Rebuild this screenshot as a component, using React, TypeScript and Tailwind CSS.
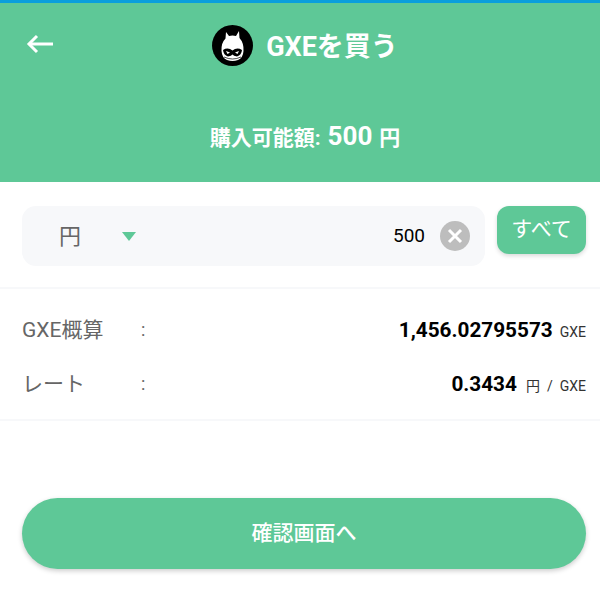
const FONT = "font-['Roboto','Noto_Sans_CJK_JP',sans-serif]";

function Logo() {
  return (
    <svg width="41" height="41" viewBox="0 0 41 41" className="shrink-0">
      <circle cx="20.5" cy="20.5" r="20.5" fill="#000" />
      <path
        d="M14 7 L17 11 Q20.5 10 24 11 L27 6 L27.5 13 Q32 18 31.5 26 Q31 33 26 35 Q20.5 37 15 35 Q10 33 9.5 26 Q9 18 13.5 13.5 Z"
        fill="#fff"
      />
      <path d="M11 25 Q16 22 20.5 25.5 Q25 22 30 25 Q29.5 30 25 31.5 Q21.5 31 20.5 29.5 Q19.5 31 16 31.5 Q11.5 30 11 25 Z" fill="#000" />
      <path d="M14 26 L18 27.5 L15.5 29 Z M27 26 L23 27.5 L25.5 29 Z" fill="#fff" />
      <path d="M12 32 Q20.5 36 29 32" fill="none" stroke="#000" strokeWidth="0.7" />
    </svg>
  );
}

function InfoRow({ label, children }: { label: string; children: React.ReactNode }) {
  return (
    <div className="flex items-center h-[54px]">
      <span className="w-[119px] text-[21px] text-[#666]">{label}</span>
      <span className="-mt-[3px] text-[18px] text-[#666]">:</span>
      <div className="ml-auto flex items-baseline text-black">{children}</div>
    </div>
  );
}

export default function App() {
  return (
    <div className={`w-[600px] h-[599px] bg-white overflow-hidden ${FONT}`}>
      <header className="h-[182px] bg-[#5ec897] border-t-[3px] border-[#0a9fdc] text-white">
        <div className="relative flex items-center justify-center pt-[22px] pl-[10px] h-[63px]">
          <svg width="28" height="20" viewBox="0 0 28 20" className="absolute left-[26px] top-[31px]" fill="none" stroke="#fff" strokeWidth="3">
            <path d="M27 10 H3" />
            <path d="M11 2 L3 10 L11 18" />
          </svg>
          <div className="flex items-center gap-[13px]">
            <Logo />
            <span className="mt-[3px] text-[27px] font-bold">GXEを買う</span>
          </div>
        </div>
        <div className="mt-[51px] pl-[10px] flex items-baseline justify-center font-bold">
          <span className="text-[21px]">購入可能額:</span>
          <span className="text-[26px] ml-[7px]">500</span>
          <span className="text-[21px] ml-[7px]">円</span>
        </div>
      </header>

      <section className="flex items-start gap-[12px] pl-[22px] pr-[14px] pt-[24px] pb-[21px] border-b-2 border-[#f7f8fa]">
        <div className="flex items-center flex-1 h-[60px] rounded-[14px] bg-[#f7f8fa]">
          <span className="ml-[37px] text-[22px] text-[#666]">円</span>
          <span className="ml-[41px] w-0 h-0 border-x-[7px] border-x-transparent border-t-[9px] border-t-[#5ec897]" />
          <span className="ml-auto text-[19px] text-black">500</span>
          <span className="mx-[15px] flex items-center justify-center w-[30px] h-[30px] rounded-full bg-[#bdbdbd]">
            <svg width="16" height="16" viewBox="0 0 16 16" fill="none" stroke="#fff" strokeWidth="3">
              <path d="M2 2 L14 14 M14 2 L2 14" />
            </svg>
          </span>
        </div>
        <button className="w-[89px] h-[48px] rounded-[12px] bg-[#5ec897] text-white text-[21px] shadow-[0_2px_4px_rgba(0,0,0,0.15)]">
          すべて
        </button>
      </section>

      <section className="pl-[22px] pr-[14px] pt-[15px] pb-[7px] border-b-2 border-[#f7f8fa]">
        <InfoRow label="GXE概算">
          <span className="text-[20.75px] font-bold">1,456.02795573</span>
          <span className="ml-[7px] text-[14px] text-[#333]">GXE</span>
        </InfoRow>
        <InfoRow label="レート">
          <span className="text-[20.75px] font-bold">0.3434</span>
          <span className="ml-[9px] text-[14px] text-[#333]">円</span>
          <span className="ml-[7px] text-[14px] text-[#333]">/</span>
          <span className="ml-[7px] text-[14px] text-[#333]">GXE</span>
        </InfoRow>
      </section>

      <div className="pl-[22px] pr-[14px] pt-[77px]">
        <button className="w-full h-[71px] rounded-full bg-[#5ec897] text-white text-[21px] font-medium shadow-[0_2px_5px_rgba(0,0,0,0.2)]">
          確認画面へ
        </button>
      </div>
    </div>
  );
}
